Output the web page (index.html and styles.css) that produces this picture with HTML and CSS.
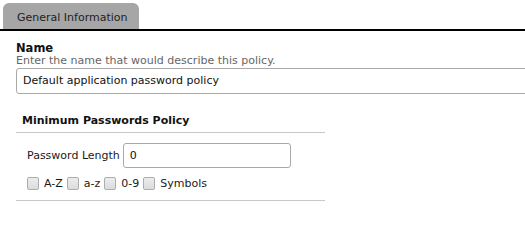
FILE: index.html
```html
<!DOCTYPE html>
<html>
<head>
<meta charset="utf-8">
<link rel="stylesheet" href="styles.css">
</head>
<body>
<div class="tabs">
  <div class="tab">General Information</div>
</div>
<div class="content">
  <div class="field">
    <div class="label">Name</div>
    <div class="desc">Enter the name that would describe this policy.</div>
    <div class="text-input wide">Default application password policy</div>
  </div>
  <div class="section">
    <div class="section-title">Minimum Passwords Policy</div>
    <div class="section-body">
      <div class="row">
        <span class="row-label">Password Length</span>
        <div class="text-input short">0</div>
      </div>
      <div class="checks">
        <span class="box"></span><span class="check-label">A-Z</span>
        <span class="box"></span><span class="check-label">a-z</span>
        <span class="box"></span><span class="check-label">0-9</span>
        <span class="box"></span><span class="check-label">Symbols</span>
      </div>
    </div>
  </div>
</div>
</body>
</html>
```
FILE: styles.css
```css
html, body {
  margin: 0;
  padding: 0;
  background: #fff;
  font-family: "DejaVu Sans", sans-serif;
  font-size: 11px;
  color: #1a1a1a;
  overflow: hidden;
}
.tabs {
  padding: 3px 0 0 3px;
  border-bottom: 2px solid #000;
  display: flex;
}
.tab {
  box-sizing: border-box;
  width: 136px;
  height: 26px;
  line-height: 24px;
  padding: 3px 0 0 14px;
  background: #a6a6a6;
  border-radius: 6px 6px 0 0;
  color: #222;
  font-size: 11px;
}
.content {
  padding-left: 16px;
}
.field {
  padding-top: 10px;
}
.label {
  font-weight: bold;
  font-size: 11.5px;
  line-height: 14px;
  color: #111;
}
.desc {
  color: #666;
  line-height: 12px;
}
.text-input {
  box-sizing: border-box;
  border: 1px solid #aaa;
  border-radius: 3px;
  background: #fff;
  color: #111;
  height: 26px;
  line-height: 24px;
  padding-left: 6px;
}
.wide {
  margin-top: 1px;
  width: 530px;
}
.section {
  width: 309px;
  margin-top: 18px;
}
.section-title {
  font-weight: bold;
  padding-left: 6px;
  line-height: 17px;
  padding-bottom: 3px;
  border-bottom: 1px solid #c8c8c8;
  color: #111;
}
.section-body {
  padding: 10px 0 10px 11px;
  border-bottom: 1px solid #c8c8c8;
}
.row {
  display: flex;
  align-items: center;
}
.row-label {
  margin-right: 3px;
}
.short {
  width: 168px;
  height: 25px;
  line-height: 23px;
}
.checks {
  display: flex;
  align-items: center;
  margin-top: 8px;
  height: 14px;
}
.box {
  box-sizing: border-box;
  width: 12px;
  height: 13px;
  border: 1px solid #adadad;
  border-radius: 2px;
  background: linear-gradient(#ececec, #dcdcdc);
  margin-right: 5px;
}
.check-label {
  margin-right: 4px;
}
```
